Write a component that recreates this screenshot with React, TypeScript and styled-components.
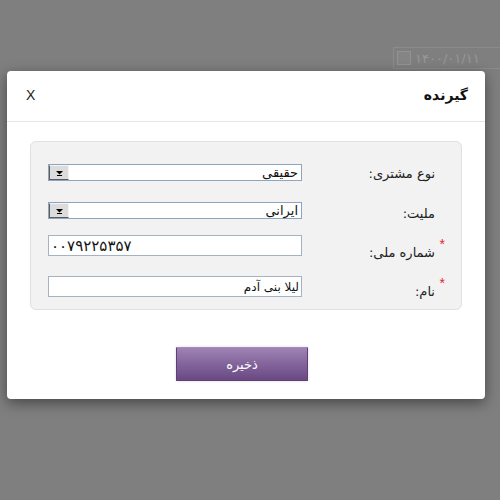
import React from 'react';
import styled, {createGlobalStyle} from 'styled-components';

const GlobalStyle = createGlobalStyle`
  html, body {
    margin: 0;
    padding: 0;
    background: #7f7f7f;
  }
  * {
    box-sizing: border-box;
  }
`;

const Page = styled.div`
  position: relative;
  width: 500px;
  height: 500px;
  overflow: hidden;
  background: #7f7f7f;
  font-family: "DejaVu Sans", Tahoma, sans-serif;
`;

// the form behind the dialog, dimmed by the overlay
const Backdrop = styled.div`
  display: flex;
  justify-content: flex-end;
  padding-top: 47px;
`;

const DateBox = styled.div`
  display: flex;
  align-items: center;
  gap: 4px;
  width: 108px;
  height: 22px;
  margin-right: -1px;
  padding-left: 3px;
  border: 1px solid #8b8b8b;
  color: #979797;
  font-size: 13px;
`;

const DateIcon = styled.div`
  width: 14px;
  height: 14px;
  border: 1px solid #939393;
  background: #858585;
`;

const Overlay = styled.div`
  position: absolute;
  inset: 0;
  padding: 71px 0 0 7px;
`;

const Modal = styled.div`
  width: 478px;
  background: #fff;
  border-radius: 4px;
  box-shadow: 0 4px 14px rgba(0, 0, 0, 0.45);
  direction: rtl;
`;

const Header = styled.div`
  display: flex;
  align-items: center;
  justify-content: space-between;
  height: 51px;
  padding: 0 17px 2px 19px;
  border-bottom: 1px solid #e6e6e6;
`;

const Title = styled.div`
  font-size: 14px;
  font-weight: bold;
  color: #111;
`;

const Close = styled.div`
  font-family: "Liberation Sans", Arial, sans-serif;
  font-size: 14px;
  color: #222;
  direction: ltr;
`;

const Body = styled.div`
  padding: 19px 23px 0 23px;
`;

const Panel = styled.div`
  display: flex;
  flex-direction: column;
  padding: 22px 0 12px 17px;
  background: #f2f2f2;
  border: 1px solid #e0e0e0;
  border-radius: 6px;
`;

const Row = styled.div<{$gap: number; $h: number}>`
  display: grid;
  grid-template-columns: 159px 254px;
  height: ${p => p.$h}px;
  margin-top: ${p => p.$gap}px;
`;

const Label = styled.div<{$shift: number}>`
  position: relative;
  align-self: center;
  padding-right: 26px;
  margin-top: ${p => p.$shift}px;
  font-size: 13px;
  color: #222;
`;

const Star = styled.span`
  position: absolute;
  right: 16px;
  top: -9px;
  color: #e0262c;
  font-size: 14px;
  font-family: "Liberation Sans", Arial, sans-serif;
`;

const Select = styled.div`
  display: flex;
  align-items: center;
  height: 17px;
  border: 1px solid #8ea4bf;
  background: #fff;
  font-size: 13px;
  color: #111;
`;

const SelectText = styled.div`
  flex: 1;
  padding-right: 3px;
  line-height: 15px;
`;

const ArrowButton = styled.div`
  display: flex;
  align-items: center;
  justify-content: center;
  width: 20px;
  height: 15px;
  background: #dcdcdc;
  border: 1px solid #8d8d8d;
  border-top-color: #f4f4f4;
  border-left-color: #5c5c5c;
  border-right-color: #f4f4f4;
  border-bottom-color: #5c5c5c;
`;

const TextInput = styled.div<{$ltr?: boolean}>`
  display: flex;
  align-items: center;
  height: 21px;
  padding: 0 2px;
  border: 1px solid #a4b2c3;
  background: #fff;
  color: #111;
  font-size: ${p => (p.$ltr ? 15 : 12)}px;
  direction: ${p => (p.$ltr ? 'ltr' : 'rtl')};
`;

const Footer = styled.div`
  display: flex;
  justify-content: center;
  padding: 37px 8px 18px 0;
`;

const SaveButton = styled.button`
  width: 132px;
  height: 34px;
  border: 1px solid #5e3f77;
  border-top-color: #a58cb8;
  border-radius: 1px;
  background: linear-gradient(#a083b4, #82649b 50%, #6a4983);
  color: #fff;
  font-family: "DejaVu Sans", Tahoma, sans-serif;
  font-size: 13px;
  box-shadow: 0 0 3px rgba(0, 0, 0, 0.15);
`;

const DropArrow = () => (
  <svg width="9" height="6" viewBox="0 0 9 6">
    <path d="M1 1h7L4.5 4.5z" fill="#000" />
    <rect x="2" y="5" width="5" height="1" fill="#000" />
  </svg>
);

const App = () => (
  <Page>
    <GlobalStyle />
    <Backdrop>
      <DateBox>
        <DateIcon />
        <span>۱۴۰۰/۰۱/۱۱</span>
      </DateBox>
    </Backdrop>
    <Overlay>
      <Modal>
        <Header>
          <Title>گیرنده</Title>
          <Close>X</Close>
        </Header>
        <Body>
          <Panel>
            <Row $gap={0} $h={17}>
              <Label $shift={1}>نوع مشتری:</Label>
              <Select>
                <SelectText>حقیقی</SelectText>
                <ArrowButton><DropArrow /></ArrowButton>
              </Select>
            </Row>
            <Row $gap={21} $h={17}>
              <Label $shift={4}>ملیت:</Label>
              <Select>
                <SelectText>ایرانی</SelectText>
                <ArrowButton><DropArrow /></ArrowButton>
              </Select>
            </Row>
            <Row $gap={16} $h={21}>
              <Label $shift={10}>
                <Star>*</Star>
                شماره ملی:
              </Label>
              <TextInput $ltr>۰۰۷۹۲۲۵۳۵۷</TextInput>
            </Row>
            <Row $gap={20} $h={21}>
              <Label $shift={8}>
                <Star>*</Star>
                نام:
              </Label>
              <TextInput>لیلا بنی آدم</TextInput>
            </Row>
          </Panel>
        </Body>
        <Footer>
          <SaveButton>ذخیره</SaveButton>
        </Footer>
      </Modal>
    </Overlay>
  </Page>
);

export default App;
